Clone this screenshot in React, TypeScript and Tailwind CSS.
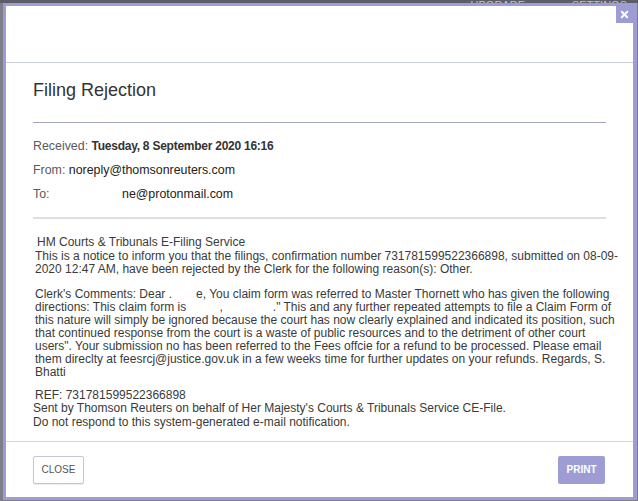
import { X } from 'lucide-react';

const font = { fontFamily: '"Liberation Sans", Arial, sans-serif' };

function Gap({ w }: { w: string }) {
  return <span className={`inline-block ${w}`} />;
}

export default function App() {
  return (
    <div className="relative w-[638px] h-[501px] overflow-hidden bg-[#7d7e88] pl-[3px] pt-[3px]" style={font}>
      {/* page behind the overlay, only its bottom edge shows */}
      <div className="absolute left-0 right-0 top-[-34px] h-[37px] bg-[#5c5d67] flex items-end justify-end gap-[47px] pr-[11px] text-[11px] leading-[11px] text-[#c3c4cd]">
        <span className="translate-y-[8px]">UPGRADE</span>
        <span className="translate-y-[8px]">SETTINGS</span>
      </div>

      <div className="relative w-[634px] border-[3px] border-r-4 border-[#9d9cd3] bg-white flex flex-col">
        <button className="absolute top-0 right-0 w-[17px] h-[17px] bg-[#9d9cd3] flex items-center justify-center">
          <X size={11} strokeWidth={4.5} color="#ffffff" />
        </button>

        <div className="h-[56px]" />
        <div className="h-px bg-[#c9ced6]" />

        <div className="px-[27px] pt-[17px] pb-[11px] text-[12px] text-[#333]">
          <h1 className="text-[18px] leading-[21px] text-[#333]">Filing Rejection</h1>
          <div className="mt-[21px] h-px bg-[#a3a7bc]" />

          <div className="mt-[11px] flex flex-col text-[12.4px]">
            <div className="h-[24px] leading-[24px]">
              <span className="text-[#5a5a5a]">Received: </span>
              <span className="text-[12px] font-bold tracking-[-0.25px] text-[#333]">Tuesday, 8 September 2020 16:16</span>
            </div>
            <div className="h-[24px] leading-[24px]">
              <span className="text-[#5a5a5a]">From: </span>
              <span className="text-[#222]">noreply@thomsonreuters.com</span>
            </div>
            <div className="h-[24px] leading-[24px]">
              <span className="inline-block w-[89px] text-[#5a5a5a]">To:</span>
              <span className="text-[#222]">ne@protonmail.com</span>
            </div>
          </div>

          <div className="mt-[11px] h-[2px] bg-[#dedede]" />

          <div className="mt-[17px] pl-[2px] whitespace-nowrap text-[#3a3a3a]">
            <div className="leading-[13.5px]">
              <div className="pl-[2px]">HM Courts &amp; Tribunals E-Filing Service</div>
              <div>This is a notice to inform you that the filings, confirmation number 731781599522366898, submitted on 08-09-</div>
              <div>2020 12:47 AM, have been rejected by the Clerk for the following reason(s): Other.</div>
            </div>

            <div className="mt-[11px] leading-[13px]">
              <div>
                Clerk's Comments: Dear .<Gap w="w-[24px]" />e, You claim form was referred to Master Thornett who has given the following
              </div>
              <div>
                directions: This claim form is <Gap w="w-[30px]" />,<Gap w="w-[50px]" />." This and any further repeated attempts to file a Claim Form of
              </div>
              <div>this nature will simply be ignored because the court has now clearly explained and indicated its position, such</div>
              <div>that continued response from the court is a waste of public resources and to the detriment of other court</div>
              <div>users". Your submission no has been referred to the Fees offcie for a refund to be processed. Please email</div>
              <div>them direclty at feesrcj@justice.gov.uk in a few weeks time for further updates on your refunds. Regards, S.</div>
              <div>Bhatti</div>
            </div>

            <div className="mt-[10px] leading-[13.8px]">
              <div>REF: 731781599522366898</div>
              <div className="ml-[-2px]">Sent by Thomson Reuters on behalf of Her Majesty's Courts &amp; Tribunals Service CE-File.</div>
              <div className="ml-[-2px]">Do not respond to this system-generated e-mail notification.</div>
            </div>
          </div>
        </div>

        <div className="h-px bg-[#d3d5df]" />

        <div className="flex items-center justify-between pl-[27px] pr-[28px] pt-[14px] pb-[13px]">
          <button className="w-[51px] h-[28px] border border-[#c6c6d2] rounded-[2px] bg-white text-[10px] text-[#555] shadow-[0_1px_1px_rgba(0,0,0,0.08)]">
            CLOSE
          </button>
          <button className="w-[47px] h-[28px] rounded-[2px] bg-[#9d9cd3] text-[10px] font-bold text-white">
            PRINT
          </button>
        </div>
      </div>
    </div>
  );
}
